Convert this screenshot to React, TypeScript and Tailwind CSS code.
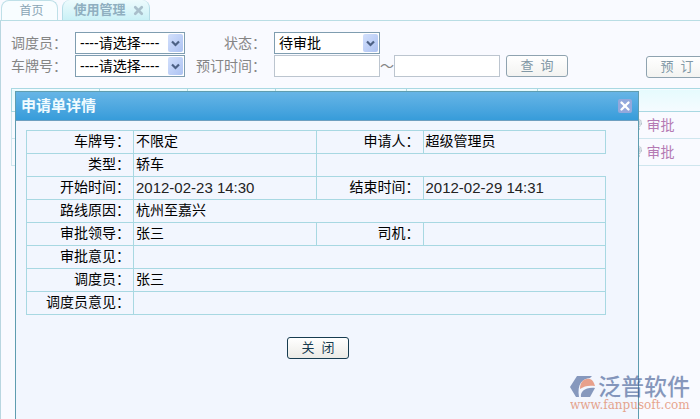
import type { ReactNode } from "react";
import { X } from "lucide-react";

interface SelectFieldProps {
  id: string;
  options: string[];
  className: string;
}

function SelectField({ id, options, className }: SelectFieldProps) {
  return (
    <div className={`relative h-[22px] shrink-0 ${className}`}>
      <select
        id={id}
        className="h-full w-full appearance-none border border-[#7f9db0] bg-white pl-1 text-sm leading-5 text-black"
      >
        {options.map((option) => (
          <option key={option}>{option}</option>
        ))}
      </select>
      <span className="pointer-events-none absolute top-0.5 right-0.5 flex h-[18px] w-[15px] items-center justify-center rounded-xs bg-linear-to-br from-[#d3e0fc] to-[#adc2f2]">
        <svg width="9" height="7" viewBox="0 0 9 7" fill="none">
          <path d="M1 1.5 4.5 5 8 1.5" stroke="#4d6185" strokeWidth="2.2" />
        </svg>
      </span>
    </div>
  );
}

function ToolButton({ children }: { children: ReactNode }) {
  return (
    <button
      type="button"
      className="h-[22px] w-[62px] shrink-0 rounded-[3px] border border-[#8fa3b0] bg-linear-to-b from-white to-[#f3f3f1] text-[13px] leading-5 whitespace-pre text-[#8198a6]"
    >
      {children}
    </button>
  );
}

function Tabs() {
  return (
    <nav className="flex h-[21px] gap-1 border-b border-[#b9dde4] pl-px">
      <a
        href="#home"
        className="flex w-[57px] items-center justify-center rounded-t-lg border-x border-t border-[#bfe0e8] bg-[#f8fdff] pl-1 text-xs leading-5 text-[#8aa5b5]"
      >
        首页
      </a>
      <div className="flex w-[88px] items-center justify-center gap-1.5 rounded-t-lg border-x border-[#b5dce6] bg-linear-to-b from-[#eefbfd] to-[#c9f1f6] pl-1.5">
        <a href="#usage" className="text-[13px] leading-5 font-bold text-[#8fafc0]">
          使用管理
        </a>
        <button type="button" aria-label="关闭标签" className="text-[#a9bfcb]">
          <X size={13} strokeWidth={5} />
        </button>
      </div>
    </nav>
  );
}

function Filters() {
  return (
    <form className="flex flex-col gap-px pt-[11px] pl-2.5 text-sm leading-[22px] text-[#858585]">
      <div className="flex">
        <label htmlFor="dispatcher" className="w-16 shrink-0">
          调度员：
        </label>
        <SelectField id="dispatcher" options={["----请选择----"]} className="w-[110px]" />
        <label htmlFor="status" className="w-[89px] shrink-0 pr-2 text-right">
          状态：
        </label>
        <SelectField id="status" options={["待审批"]} className="w-[106px]" />
      </div>
      <div className="flex">
        <label htmlFor="plate" className="w-16 shrink-0">
          车牌号：
        </label>
        <SelectField id="plate" options={["----请选择----"]} className="w-[110px]" />
        <label htmlFor="from" className="w-[89px] shrink-0 pr-2 text-right">
          预订时间：
        </label>
        <input id="from" type="text" className="h-[22px] w-[106px] shrink-0 border border-[#bcc5cf] bg-white px-1" />
        <span className="w-3.5 shrink-0 text-center">～</span>
        <input
          type="text"
          aria-label="结束时间"
          className="mr-1.5 h-[22px] w-[106px] shrink-0 border border-[#bcc5cf] bg-white px-1"
        />
        <ToolButton>{"查  询"}</ToolButton>
        <div className="ml-[78px] shrink-0">
          <ToolButton>{"预  订"}</ToolButton>
        </div>
      </div>
    </form>
  );
}

function StampIcon() {
  return (
    <svg width="12" height="14" viewBox="0 0 12 14">
      <circle cx="6" cy="5" r="4.5" fill="#dbe3e9" stroke="#b3c0c9" strokeDasharray="2 1" />
      <path d="M3 4h6M3 6h6M6 2v8" stroke="#b3c0c9" />
      <path d="M4 10h5v2H4z" fill="#c9d3da" />
    </svg>
  );
}

function RequestList() {
  return (
    <table className="mt-2.5 ml-2.5 w-[calc(100%-10px)] table-fixed border-collapse">
      <colgroup>
        <col className="w-[88px]" />
        <col className="w-[88px]" />
        <col className="w-[88px]" />
        <col className="w-[131px]" />
        <col className="w-[131px]" />
        <col />
      </colgroup>
      <thead>
        <tr className="h-[23px] border-y border-l border-[#a9d8e2] bg-linear-to-b from-[#e6fbfd] to-[#f5fbff]">
          {[0, 1, 2, 3, 4].map((n) => (
            <th key={n} className="border-r border-[#a9d8e2]" />
          ))}
          <th />
        </tr>
      </thead>
      <tbody>
        {["req-1", "req-2"].map((id) => (
          <tr key={id} className="h-[27px] border-b border-l border-[#cfe6ee]">
            <td colSpan={5} />
            <td className="pl-[93px]">
              <a href={`#${id}`} className="flex items-center gap-1 text-sm leading-5 text-[#b57ab4]">
                <StampIcon />
                审批
              </a>
            </td>
          </tr>
        ))}
      </tbody>
    </table>
  );
}

function LabelCell({ children }: { children: ReactNode }) {
  return (
    <th scope="row" className="border border-[#a8d8e2] pr-[3px] pb-0.5 text-right font-normal">
      {children}
    </th>
  );
}

function ValueCell({ children, colSpan }: { children?: ReactNode; colSpan?: number }) {
  return (
    <td colSpan={colSpan} className="border border-[#a8d8e2] pb-0.5 pl-0.5">
      {children}
    </td>
  );
}

function DetailTable() {
  return (
    <table className="w-full table-fixed border-collapse text-sm leading-5 text-black [&_tr]:h-[23px]">
      <colgroup>
        <col className="w-[107px]" />
        <col />
        <col className="w-[107px]" />
        <col />
      </colgroup>
      <tbody>
        <tr>
          <LabelCell>车牌号：</LabelCell>
          <ValueCell>不限定</ValueCell>
          <LabelCell>申请人：</LabelCell>
          <ValueCell>超级管理员</ValueCell>
        </tr>
        <tr>
          <LabelCell>类型：</LabelCell>
          <ValueCell>轿车</ValueCell>
        </tr>
        <tr>
          <LabelCell>开始时间：</LabelCell>
          <ValueCell>
            <span className="block pt-0.5 text-[15px] leading-[18px] text-[#222]">2012-02-23 14:30</span>
          </ValueCell>
          <LabelCell>结束时间：</LabelCell>
          <ValueCell>
            <span className="block pt-0.5 text-[15px] leading-[18px] text-[#222]">2012-02-29 14:31</span>
          </ValueCell>
        </tr>
        <tr>
          <LabelCell>路线原因：</LabelCell>
          <ValueCell colSpan={3}>杭州至嘉兴</ValueCell>
        </tr>
        <tr>
          <LabelCell>审批领导：</LabelCell>
          <ValueCell>张三</ValueCell>
          <LabelCell>司机：</LabelCell>
          <ValueCell />
        </tr>
        <tr>
          <LabelCell>审批意见：</LabelCell>
          <ValueCell colSpan={3} />
        </tr>
        <tr>
          <LabelCell>调度员：</LabelCell>
          <ValueCell colSpan={3}>张三</ValueCell>
        </tr>
        <tr>
          <LabelCell>调度员意见：</LabelCell>
          <ValueCell colSpan={3} />
        </tr>
      </tbody>
    </table>
  );
}

function DetailDialog() {
  return (
    <section
      role="dialog"
      aria-labelledby="detail-title"
      className="absolute top-[91px] right-[61px] bottom-0 left-[15px] border-x border-t border-[#5f9db0] bg-[#f2f6fe]"
    >
      <header className="flex h-[29px] items-center justify-between border-b border-[#6f9fc0] bg-linear-to-b from-[#66b5e6] to-[#369cda] pr-1.5 pl-[5px]">
        <h2 id="detail-title" className="text-[15px] leading-6 font-bold text-[#f0fbff]">
          申请单详情
        </h2>
        <button
          type="button"
          aria-label="关闭窗口"
          className="flex size-3.5 items-center justify-center rounded-xs bg-[#93a8dc] text-white"
        >
          <X size={14} strokeWidth={4} />
        </button>
      </header>
      <div className="pt-[9px] pr-8 pl-2.5">
        <DetailTable />
        <div className="mt-[22px] flex justify-center pl-1">
          <button
            type="button"
            className="h-[22px] w-[62px] rounded-[3px] border border-[#173c50] bg-linear-to-b from-white to-[#ecebe6] text-[13px] leading-5 whitespace-pre text-[#173c50]"
          >
            {"关  闭"}
          </button>
        </div>
      </div>
    </section>
  );
}

function Watermark() {
  return (
    <div className="pointer-events-none absolute right-2.5 bottom-2 opacity-60">
      <div className="flex items-center gap-0.5">
        <svg width="26" height="24" viewBox="0 0 26 24">
          <path d="M7 1h15l-2 2C12 4 7 9 9 22H6L0 12z" fill="#405b93" />
          <path d="M10 14C10 7 14 3 20 4c3 1 4 4 5 7-6-1-11 0-15 3z" fill="#e2683f" />
          <path d="M11 22c-1-5 4-10 14-9l-5 9z" fill="#405b93" />
        </svg>
        <span className="text-[23px] leading-6 font-medium text-[#3a568f]">泛普软件</span>
      </div>
      <div className="font-['DejaVu_Serif'] text-[12px] leading-3 text-[#dc6c42]">www.fanpusoft.com</div>
    </div>
  );
}

export default function App() {
  return (
    <main className="relative flex min-h-screen flex-col overflow-hidden bg-[#f9faff] font-['Liberation_Sans','Noto_Sans_CJK_SC',sans-serif]">
      <Tabs />
      <div className="flex-1 border-l border-[#b9d6e0]">
        <Filters />
        <RequestList />
      </div>
      <DetailDialog />
      <Watermark />
    </main>
  );
}
